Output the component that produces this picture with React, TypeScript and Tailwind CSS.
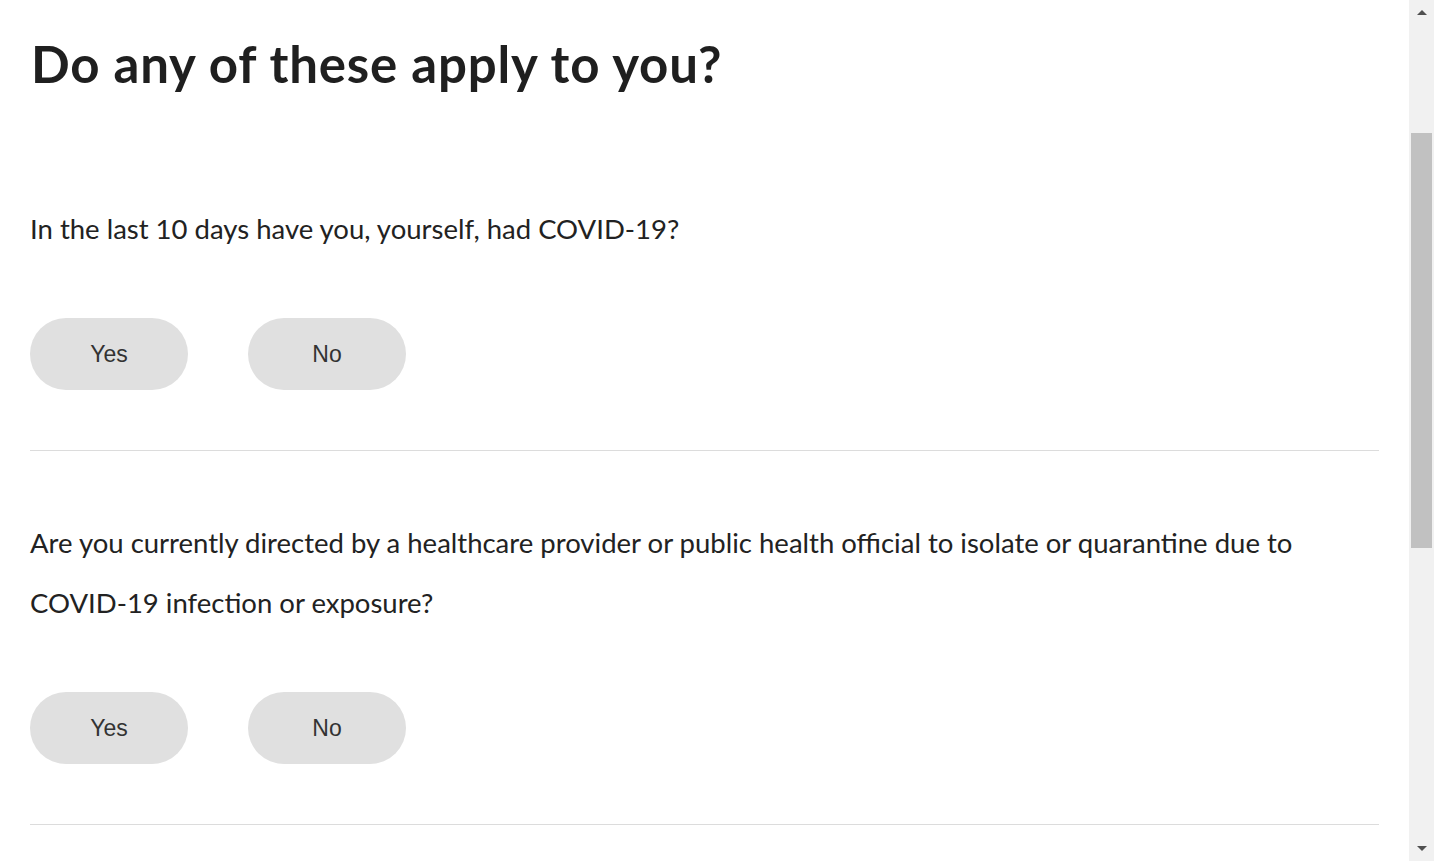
import React from 'react'

const questions = [
  'In the last 10 days have you, yourself, had COVID-19?',
  'Are you currently directed by a healthcare provider or public health official to isolate or quarantine due to COVID-19 infection or exposure?',
]

function AnswerButton({ label }: { label: string }) {
  return (
    <button
      type="button"
      className="h-[72px] w-[158px] rounded-full bg-[#e0e0e0] text-[23px] text-[#333] font-['Liberation_Sans',Arial,sans-serif]"
    >
      {label}
    </button>
  )
}

function Question({ text }: { text: string }) {
  return (
    <div className="border-b border-[#dcdcdc] pt-[62px] pb-[60px]">
      <p className="text-[27.5px] leading-[60px] text-[#222]">{text}</p>
      <div className="mt-[59px] flex gap-[60px]">
        <AnswerButton label="Yes" />
        <AnswerButton label="No" />
      </div>
    </div>
  )
}

function Scrollbar() {
  return (
    <div className="flex h-full w-[25px] flex-col bg-[#f1f1f1]">
      <div className="flex h-[25px] items-center justify-center">
        <div className="h-0 w-0 border-x-[5px] border-b-[5px] border-x-transparent border-b-[#505050]" />
      </div>
      <div className="flex flex-1 flex-col px-[2px]">
        <div className="h-[108px]" />
        <div className="h-[415px] bg-[#c1c1c1]" />
      </div>
      <div className="flex h-[25px] items-center justify-center">
        <div className="h-0 w-0 border-x-[5px] border-t-[5px] border-x-transparent border-t-[#505050]" />
      </div>
    </div>
  )
}

export default function App() {
  return (
    <div className="flex h-[861px] w-full overflow-hidden bg-white font-['Lato','Noto_Sans',sans-serif]">
      <main className="flex-1 px-[30px]">
        <h1 className="mb-[41px] pl-[1px] pt-[32px] text-[51px] leading-[64px] font-bold tracking-[0.8px] text-[#1f1f1f]">
          Do any of these apply to you?
        </h1>
        {questions.map((q) => (
          <Question key={q} text={q} />
        ))}
      </main>
      <Scrollbar />
    </div>
  )
}
